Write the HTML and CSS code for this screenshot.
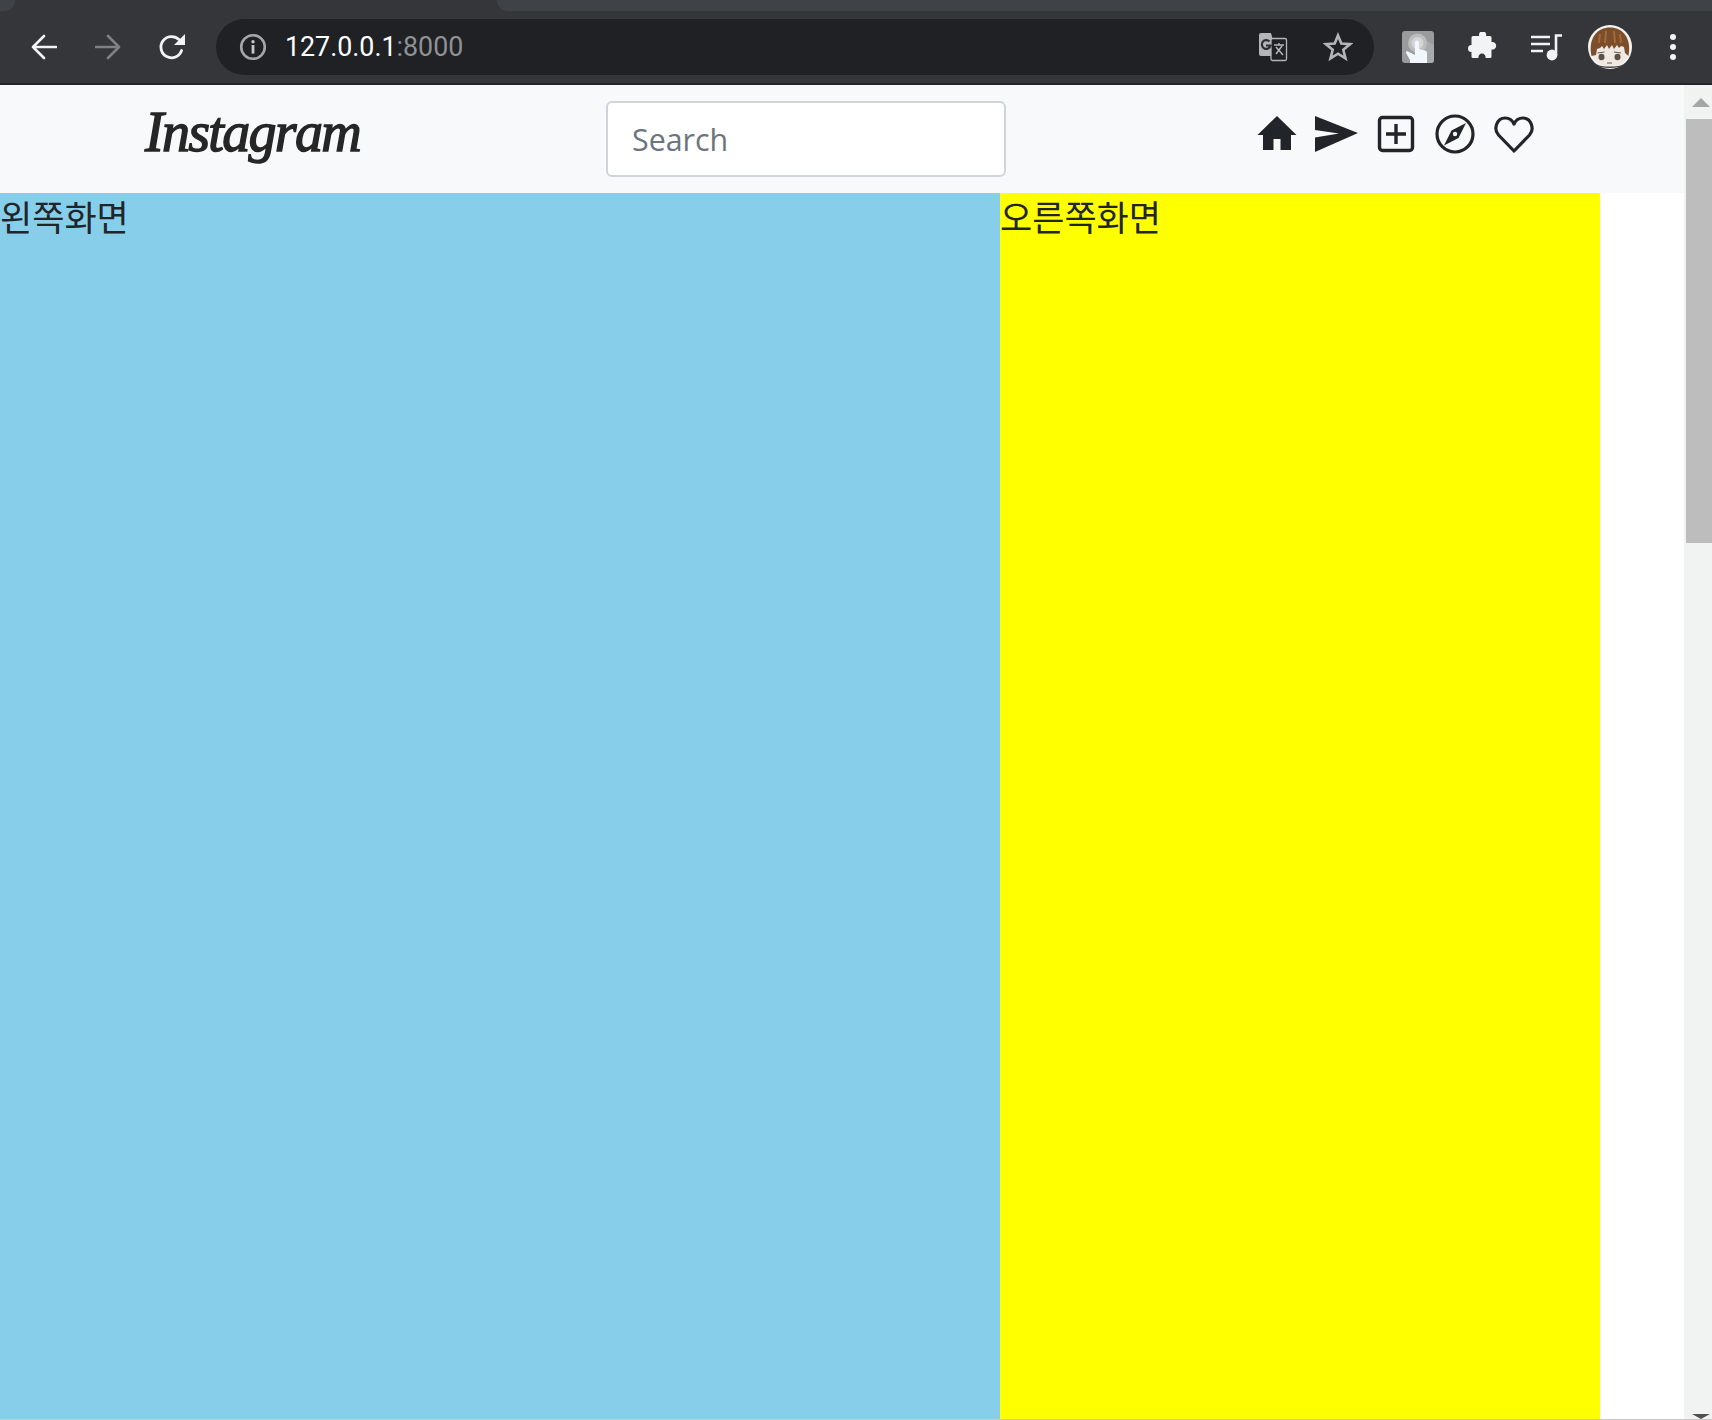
FILE: index.html
```html
<!DOCTYPE html>
<html lang="ko">
<head>
  <meta charset="UTF-8" />
  <title>Instagram</title>
  <meta name="viewport" content="width=device-width, initial-scale=1" />
  <link rel="stylesheet" href="styles.css">
</head>
<body>
  <div class="chrome">
    <div class="tabstrip">
      <div class="tab-stub"></div>
      <div class="tab-next"></div>
    </div>
    <div class="toolbar">
      <svg class="tool tool-back" viewBox="0 0 26 26"><path d="M25 13H2M13 2 2 13l11 11" fill="none" stroke="#f1f3f4" stroke-width="2.6" stroke-linecap="round" stroke-linejoin="round"/></svg>
      <svg class="tool tool-forward" viewBox="0 0 26 26"><path d="M1 13h23M13 2l11 11-11 11" fill="none" stroke="#7e8083" stroke-width="2.6" stroke-linecap="round" stroke-linejoin="round"/></svg>
      <svg class="tool tool-reload" viewBox="0 0 28 28"><path d="M23.6 17.5A10.6 10.6 0 1 1 21 6.6" fill="none" stroke="#f1f3f4" stroke-width="2.8" stroke-linecap="round"/><path d="M27 1v11H16z" fill="#f1f3f4"/></svg>
      <div class="omnibox">
        <svg class="info" viewBox="0 0 28 28"><circle cx="14" cy="14" r="11.8" fill="none" stroke="#a4a6a8" stroke-width="2.6"/><circle cx="14" cy="8.8" r="1.7" fill="#c4c6c8"/><rect x="12.6" y="12" width="2.8" height="8.6" fill="#c4c6c8"/></svg>
        <span class="url">127.0.0.1<span class="port">:8000</span></span>
        <svg class="translate" viewBox="0 0 30 30">
          <path d="M1 3a2 2 0 0 1 2-2h10l7 26-5-3H3a2 2 0 0 1-2-2z" fill="#b4b5b7"/>
          <rect x="13" y="6.5" width="15.5" height="22" rx="1.5" fill="#202124" stroke="#b4b5b7" stroke-width="1.3"/>
          <path d="M11.5 9.5a4.4 4.4 0 1 0 1 4H8" fill="none" stroke="#2c2d30" stroke-width="2.2"/>
          <path d="M16 13h10M21 11v2M18 22l6-8M18 15l7 8" fill="none" stroke="#b4b5b7" stroke-width="1.5"/>
        </svg>
        <svg class="star" viewBox="0 0 30 30"><path d="m15 3.4 3.3 8.2 8.8.6-6.8 5.6 2.2 8.6-7.5-4.7-7.5 4.7 2.2-8.6-6.8-5.6 8.8-.6z" fill="none" stroke="#b4b5b7" stroke-width="2.6" stroke-linejoin="miter"/></svg>
      </div>
      <svg class="ext-touch" viewBox="0 0 32 32">
        <rect width="32" height="32" rx="3" fill="#9a9b9c"/>
        <path d="M32 14v15a3 3 0 0 1-3 3H16L10 16l8-10z" fill="#a9aaab"/>
        <circle cx="15.5" cy="12" r="9.5" fill="#bcbdbe"/>
        <circle cx="15.5" cy="12" r="6" fill="#d4d5d6"/>
        <path d="M13 11.5a2 2 0 0 1 4 0V18l6 1.5c1.5.4 2 1.3 2 2.7V32H8v-3l-4-7c-.5-1 1-2.4 2.4-1.2L13 24z" fill="#f1f7fb"/>
      </svg>
      <svg class="ext-puzzle" viewBox="0 0 30 30"><path d="M10 5h3.2a3.6 3.6 0 1 1 6.8 0h4a1.5 1.5 0 0 1 1.5 1.5V11a3.8 3.8 0 1 1 0 7.4v7.1A1.5 1.5 0 0 1 24 27h-4.5a3.6 3.6 0 1 0-7 0H7a1.5 1.5 0 0 1-1.5-1.500V21a3.500 3.500 0 1 1 0-7V6.500A1.500 1.500 0 0 1 7 5z" fill="#f1f3f4" transform="translate(-1 -1)"/></svg>
      <svg class="ext-media" viewBox="0 0 32 30"><path d="M1 5h19M1 12h19M1 19h12" stroke="#f1f3f4" stroke-width="2.6" fill="none"/><circle cx="22" cy="23" r="5.400" fill="#f1f3f4"/><path d="M26 23V3.500h6" stroke="#f1f3f4" stroke-width="2.600" fill="none"/></svg>
      <svg class="avatar" viewBox="0 0 44 44">
        <circle cx="22" cy="22" r="22" fill="#f6f4f2"/>
        <circle cx="22" cy="22" r="20" fill="#efe8e3"/>
        <path d="M3.500 31C0 12 10 2.500 22 2.500S44 12 40.500 31L37 28l-1-6-3-1-2 2-2-3-3 4-2-4-3 4-2-4-3 4-2-3-2 2-3 1-1 6z" fill="#7c4f2a"/>
        <path d="M12 9l-1 9M18 6l-1 12M26 6l1 12M32 9l1 9" stroke="#a36d3d" stroke-width="1.800" fill="none"/>
        <ellipse cx="13.500" cy="32" rx="3" ry="3.200" fill="#5c5147"/>
        <ellipse cx="29.500" cy="32" rx="3" ry="3.200" fill="#5c5147"/>
        <path d="M9.500 28l7-1M26 27l7 1M19 38h5" stroke="#6b5a4c" stroke-width="1.200" fill="none"/>
        <path d="M9 40c4 3 22 3 26 0" stroke="#45474a" stroke-width="1.400" fill="none"/>
      </svg>
      <svg class="kebab" viewBox="0 0 8 28"><circle cx="4" cy="4" r="3" fill="#f1f3f4"/><circle cx="4" cy="14" r="3" fill="#f1f3f4"/><circle cx="4" cy="24" r="3" fill="#f1f3f4"/></svg>
    </div>
  </div>

  <div class="window">
    <div class="page">
      <nav class="navbar">
        <a class="logo" href="#">Instagram</a>
        <input class="search" type="text" placeholder="Search">
        <div class="nav-icons">
          <a class="nav-icon nav-home" href="#"><svg width="40" height="40" viewBox="0 0 40 40"><path d="M20 2 39.500 21H34V36H23.500V25h-7V36H6V21H.5z" fill="#212529"/></svg></a>
          <a class="nav-icon" href="#"><svg width="43" height="40" viewBox="0 0 43 40"><path d="M0 2 43 19 0 38V23.500L24 19.500 0 16z" fill="#212529"/></svg></a>
          <a class="nav-icon" href="#"><svg width="40" height="40" viewBox="0 0 40 40"><rect x="3.500" y="3.500" width="33" height="33" rx="3" fill="none" stroke="#212529" stroke-width="3.400"/><path d="M20 10v20M10 20h20" stroke="#212529" stroke-width="3.400"/></svg></a>
          <a class="nav-icon" href="#"><svg width="40" height="40" viewBox="0 0 40 40"><circle cx="20" cy="20" r="18" fill="none" stroke="#212529" stroke-width="3.200"/><path d="M31 9 23.500 24 9 31.500 16.500 16.500z" fill="#212529"/><circle cx="20" cy="20" r="2.200" fill="#f8f9fa"/></svg></a>
          <a class="nav-icon" href="#"><svg width="40" height="40" viewBox="0 0 40 40"><path d="M20 37 4.500 21C-1 15 3 4 11 4c4.500 0 7.500 2.500 9 6 1.500-3.500 4.500-6 9-6 8 0 12 11 6.500 17z" fill="none" stroke="#212529" stroke-width="3.200" stroke-linejoin="round"/></svg></a>
        </div>
      </nav>
      <div class="main">
        <div class="left">왼쪽화면</div>
        <div class="right">오른쪽화면</div>
      </div>
    </div>
    <div class="scrollbar">
      <div class="arrow-up"></div>
      <div class="thumb"></div>
      <div class="arrow-down"></div>
    </div>
  </div>
</body>
</html>
```

FILE: styles.css
```css
html, body {
  height: 100%;
}
body {
  margin: 0;
  height: 1420px;
  overflow: hidden;
  display: flex;
  flex-direction: column;
  font-family: "Noto Sans CJK KR", "Noto Sans", sans-serif;
  color: #212529;
  background-color: #fff;
}

/* browser frame */
.chrome {
  height: 85px;
  flex: none;
  background-color: #35363a;
  border-bottom: 2px solid #242528;
  box-sizing: border-box;
}
.tabstrip {
  height: 11px;
  display: flex;
  justify-content: space-between;
}
.tab-stub {
  width: 15px;
  background-color: #3f4246;
  border-bottom-right-radius: 10px;
}
.tab-next {
  width: 1215px;
  background-color: #3f4246;
  border-bottom-left-radius: 10px;
}
.toolbar {
  height: 72px;
  display: flex;
  align-items: center;
  padding-left: 31px;
  box-sizing: border-box;
}
.tool {
  flex: none;
}
.tool-back {
  width: 26px;
  height: 26px;
}
.tool-forward {
  width: 26px;
  height: 26px;
  margin-left: 38px;
}
.tool-reload {
  width: 28px;
  height: 28px;
  margin-left: 37px;
}
.omnibox {
  width: 1158px;
  height: 56px;
  margin-left: 30px;
  flex: none;
  display: flex;
  align-items: center;
  background-color: #202124;
  border-radius: 28px;
  padding-left: 23px;
  box-sizing: border-box;
}
.info {
  width: 28px;
  height: 28px;
  flex: none;
}
.url {
  margin-left: 18px;
  font-family: Roboto, sans-serif;
  font-size: 26.8px;
  color: #fff;
}
.port {
  color: #8f9193;
}
.translate {
  width: 30px;
  height: 30px;
  margin-left: auto;
}
.star {
  width: 30px;
  height: 30px;
  margin-left: 35px;
  margin-right: 21px;
}
.ext-touch {
  width: 32px;
  height: 32px;
  margin-left: 28px;
  flex: none;
}
.ext-puzzle {
  width: 30px;
  height: 30px;
  margin-left: 33px;
  flex: none;
}
.ext-media {
  width: 32px;
  height: 30px;
  margin-left: 33px;
  flex: none;
}
.avatar {
  width: 44px;
  height: 44px;
  margin-left: 26px;
  flex: none;
}
.kebab {
  width: 8px;
  height: 28px;
  margin-left: 37px;
  flex: none;
}

/* page */
.window {
  flex: 1;
  display: flex;
  min-height: 0;
  border-bottom: 1px solid #c9c9c9;
}
.page {
  flex: 1;
  min-width: 0;
  display: flex;
  flex-direction: column;
}
.navbar {
  height: 108px;
  flex: none;
  display: flex;
  align-items: flex-start;
  background-color: #f8f9fa;
  padding-left: 145px;
  box-sizing: border-box;
}
.logo {
  width: 213px;
  height: 80px;
  margin-top: 7px;
  flex: none;
  font-family: "Liberation Serif", serif;
  font-style: italic;
  font-size: 56px;
  letter-spacing: -1.7px;
  line-height: 80px;
  white-space: nowrap;
  color: #262626;
  text-decoration: none;
  -webkit-text-stroke: 1.4px #262626;
}
.search {
  width: 400px;
  height: 76px;
  margin-top: 16px;
  margin-left: 248px;
  flex: none;
  padding: 0 24px;
  font-family: "Open Sans", sans-serif;
  font-size: 30.4px;
  color: #6c757d;
  background-color: #fff;
  border: 2px solid #ced4da;
  border-radius: 6px;
  box-sizing: border-box;
}
.search::placeholder {
  color: #6c757d;
  opacity: 1;
}
.nav-icons {
  display: flex;
  margin-left: 241px;
  margin-top: 29px;
}
.nav-icon {
  width: 59px;
  height: 40px;
  display: flex;
  justify-content: center;
}
.nav-home {
  width: 60px;
  justify-content: flex-start;
  padding-left: 10px;
  box-sizing: border-box;
}
.main {
  flex: 1;
  display: flex;
  min-height: 0;
}
.left, .right {
  font-size: 35px;
  line-height: 46px;
}
.left {
  width: 1000px;
  background-color: skyblue;
}
.right {
  width: 600px;
  background-color: yellow;
}

/* scrollbar */
.scrollbar {
  width: 28px;
  flex: none;
  display: flex;
  flex-direction: column;
  align-items: flex-end;
  background-color: #f1f3f3;
}
.arrow-up {
  width: 0;
  height: 0;
  margin: 13px 2px 12px 0;
  border-left: 9px solid transparent;
  border-right: 9px solid transparent;
  border-bottom: 9px solid #a3a5a6;
}
.thumb {
  width: 26px;
  height: 424px;
  background-color: #bdbdbd;
}
.arrow-down {
  width: 0;
  height: 0;
  margin: auto 2px 0 0;
  border-left: 9px solid transparent;
  border-right: 9px solid transparent;
  border-top: 5px solid #505050;
}
```
